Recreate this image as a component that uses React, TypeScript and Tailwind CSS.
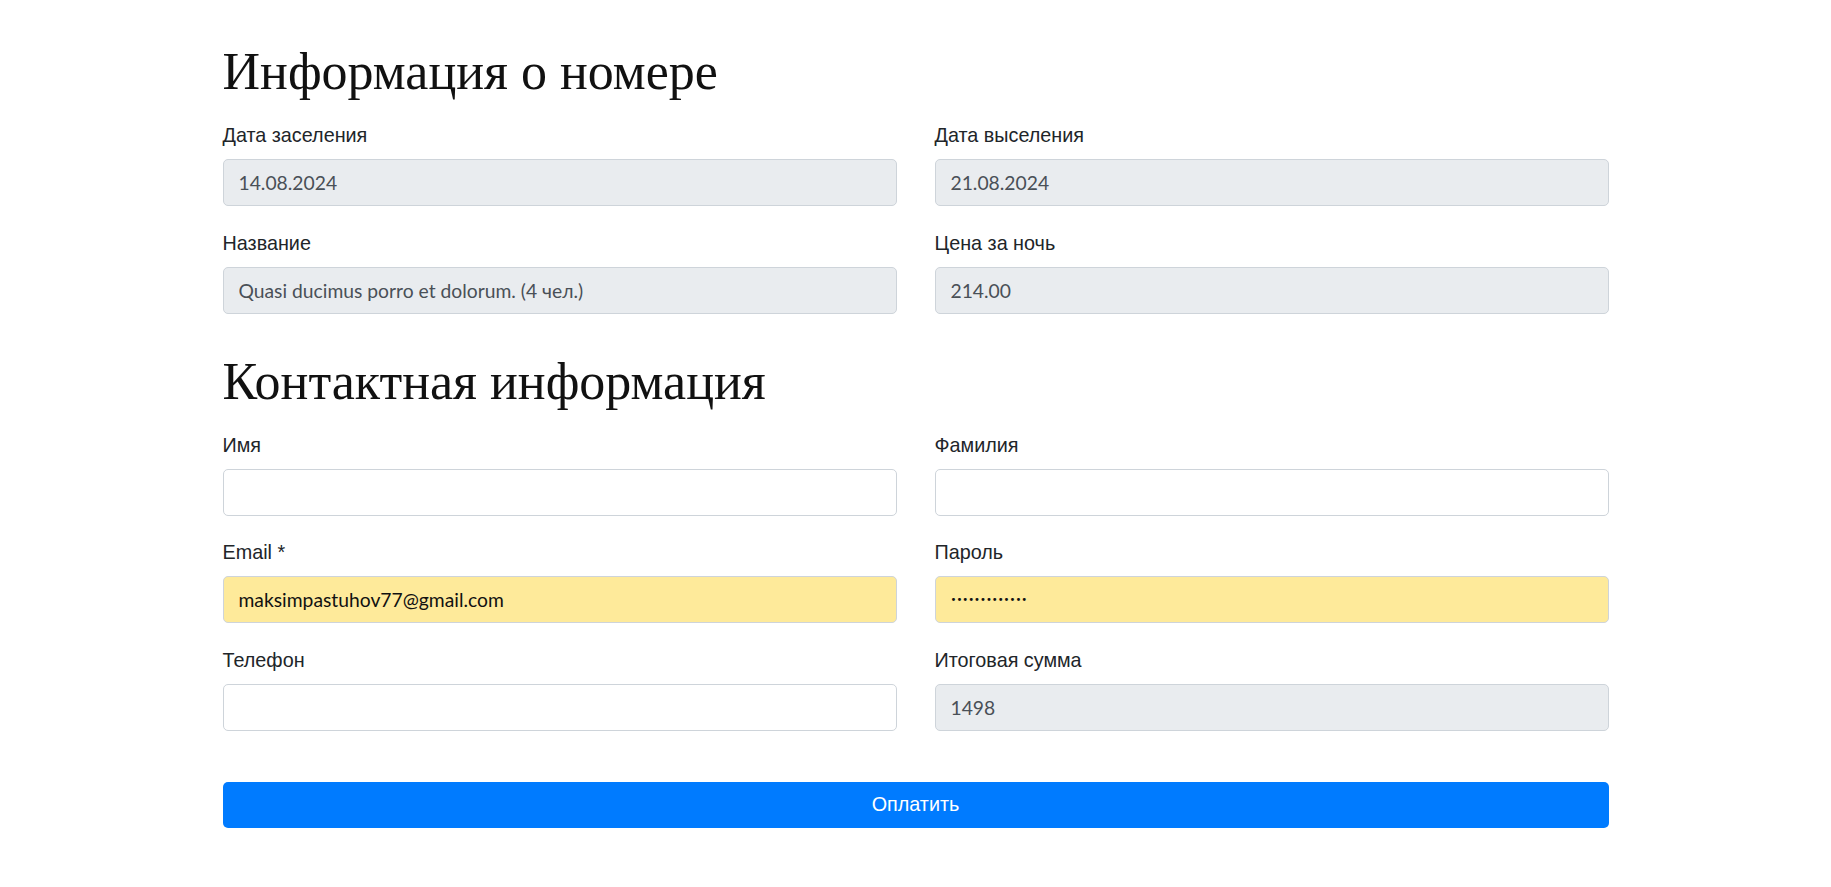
import React from "react";

type Field = {
  label: string;
  value?: string;
  variant: "disabled" | "empty" | "autofill" | "password";
};

const sans = "font-['Liberation_Sans',Arial,sans-serif]";
const inputFont = "font-['Lato','Open_Sans',sans-serif]";

function FieldBox({ f }: { f: Field }) {
  const base = `block w-full h-[47px] rounded-[5px] border border-[#ced4da] px-[15px] text-[19.3px] outline-none ${inputFont}`;
  let cls = base;
  if (f.variant === "disabled") cls += " bg-[#e9ecef] text-[#495057]";
  else if (f.variant === "empty") cls += " bg-white text-[#212529]";
  else cls += " bg-[#feea9a] text-[#111111]";
  return (
    <div className="flex flex-col">
      <label className={`${sans} text-[19.8px] leading-[28.5px] text-[#212529] mb-[9.5px]`}>{f.label}</label>
      {f.variant === "password" ? (
        <div className={`${cls} flex items-center`}>
          <span className="text-[10px] tracking-[0px] font-['DejaVu_Sans',sans-serif]">•••••••••••••</span>
        </div>
      ) : (
        <input className={cls} readOnly value={f.value ?? ""} disabled={f.variant === "disabled"} />
      )}
    </div>
  );
}

function Section({ title, fields, first }: { title: string; fields: Field[]; first?: boolean }) {
  return (
    <section className={first ? "" : "mt-[37px]"}>
      <h2 className="font-['Liberation_Serif','Times_New_Roman',serif] text-[52px] leading-[62px] text-[#111] mb-[18px]">
        {title}
      </h2>
      <div className="grid grid-cols-2 gap-x-[38px] gap-y-[22.5px]">
        {fields.map((f) => (
          <FieldBox key={f.label} f={f} />
        ))}
      </div>
    </section>
  );
}

export default function App() {
  const room: Field[] = [
    { label: "Дата заселения", value: "14.08.2024", variant: "disabled" },
    { label: "Дата выселения", value: "21.08.2024", variant: "disabled" },
    { label: "Название", value: "Quasi ducimus porro et dolorum. (4 чел.)", variant: "disabled" },
    { label: "Цена за ночь", value: "214.00", variant: "disabled" },
  ];
  const contact: Field[] = [
    { label: "Имя", variant: "empty" },
    { label: "Фамилия", variant: "empty" },
    { label: "Email *", value: "maksimpastuhov77@gmail.com", variant: "autofill" },
    { label: "Пароль", variant: "password" },
    { label: "Телефон", variant: "empty" },
    { label: "Итоговая сумма", value: "1498", variant: "disabled" },
  ];
  return (
    <div className="min-h-screen bg-white">
      <div className="mx-auto w-[1386px] pt-[41px] pb-[60px]">
        <Section title="Информация о номере" fields={room} first />
        <Section title="Контактная информация" fields={contact} />
        <button
          className={`${sans} mt-[51px] w-full h-[46px] rounded-[5px] bg-[#007bff] text-white text-[19.8px]`}
        >
          Оплатить
        </button>
      </div>
    </div>
  );
}
